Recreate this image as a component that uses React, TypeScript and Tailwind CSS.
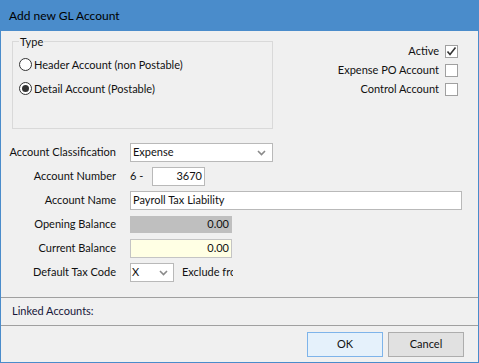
import React from 'react';

function Radio({ checked, label }: { checked?: boolean; label: string }) {
  return (
    <label className="flex items-center gap-[2px] h-[15px]">
      <span className="w-[13px] h-[13px] rounded-full border border-[#333] bg-white flex items-center justify-center">
        {checked && <span className="w-[7px] h-[7px] rounded-full bg-[#333]" />}
      </span>
      <span>{label}</span>
    </label>
  );
}

function Check({ checked, label }: { checked?: boolean; label: string }) {
  return (
    <div className="flex items-center justify-end gap-[6px] h-[13px]">
      <span>{label}</span>
      <span className="w-[13px] h-[13px] border border-[#a0a0a0] bg-white flex items-center justify-center">
        {checked && (
          <svg width="11" height="11" viewBox="0 0 11 11">
            <polyline points="1.5,5.5 4,8.5 9.5,1.5" fill="none" stroke="#333" strokeWidth="1.6" />
          </svg>
        )}
      </span>
    </div>
  );
}

function Chevron() {
  return (
    <svg width="9" height="6" viewBox="0 0 9 6">
      <polyline points="1,1 4.5,4.5 8,1" fill="none" stroke="#8a8a8a" strokeWidth="1.6" />
    </svg>
  );
}

function Row({ label, children }: { label: string; children: React.ReactNode }) {
  return (
    <div className="flex items-center h-[19px]">
      <div className="w-[116px] text-right pr-[1px]">{label}</div>
      <div className="ml-[13px] flex items-center h-full">{children}</div>
    </div>
  );
}

export default function App() {
  return (
    <div
      className="w-[479px] h-[363px] bg-[#f0f0f0] border-x border-b border-[#4a8ccb] flex flex-col text-[11px] text-[#111] overflow-hidden whitespace-nowrap"
      style={{ fontFamily: 'Lato, "Noto Sans", sans-serif' }}
    >
      <div className="h-[31px] shrink-0 bg-[#4a8ccb] -mx-px px-[9px] flex items-center text-[12px] text-black">
        Add new GL Account
      </div>

      <div className="flex-1 flex flex-col">
        <div className="flex justify-between pt-[3px]">
          <fieldset className="ml-[11px] w-[261px] h-[95px] border border-[#d9d9d9] px-[6px] leading-[15px]">
            <legend className="px-px">Type</legend>
            <div className="flex flex-col gap-[9px] mt-[8px]">
              <Radio label="Header Account (non Postable)" />
              <Radio checked label="Detail Account (Postable)" />
            </div>
          </fieldset>
          <div className="flex flex-col gap-[6px] pt-[11px] pr-[20px]">
            <Check checked label="Active" />
            <Check label="Expense PO Account" />
            <Check label="Control Account" />
          </div>
        </div>

        <div className="flex flex-col gap-[5px] mt-[14px]">
          <Row label="Account Classification">
            <div className="w-[143px] h-[19px] border border-[#b9b9b9] bg-white flex items-center justify-between pl-[2px] pr-[6px]">
              <span>Expense</span>
              <Chevron />
            </div>
          </Row>
          <Row label="Account Number">
            <span className="w-[22px]">6 -</span>
            <div className="w-[53px] h-[19px] border border-[#b9b9b9] bg-white flex items-center justify-end pr-[2px]">
              3670
            </div>
          </Row>
          <Row label="Account Name">
            <div className="w-[332px] h-[19px] border border-[#b9b9b9] bg-white flex items-center pl-[2px]">
              Payroll Tax Liability
            </div>
          </Row>
          <Row label="Opening Balance">
            <div className="w-[102px] h-[17px] bg-[#bfbfbf] flex items-center justify-end pr-[3px]">0.00</div>
          </Row>
          <Row label="Current Balance">
            <div className="w-[102px] h-[19px] border border-[#c4c4c4] bg-[#ffffe4] flex items-center justify-end pr-[2px]">
              0.00
            </div>
          </Row>
          <Row label="Default Tax Code">
            <div className="w-[44px] h-[19px] border border-[#b9b9b9] bg-white flex items-center justify-between pl-[1px] pr-[5px]">
              <span>X</span>
              <Chevron />
            </div>
            <span className="ml-[8px] w-[51px] overflow-hidden">Exclude fro</span>
          </Row>
        </div>

        <div className="mt-auto border-t border-[#a0a0a0] h-[28px] flex items-center pl-[11px] text-[#16163a]">
          Linked Accounts:
        </div>
      </div>

      <div className="h-[37px] shrink-0 border-t border-[#a0a0a0] flex justify-end items-start gap-[5px] pt-[6px] pr-[14px]">
        <button className="w-[76px] h-[25px] border border-[#7eb4ea] bg-[#e5f1fb]">OK</button>
        <button className="w-[76px] h-[25px] border border-[#adadad] bg-[#e1e1e1]">Cancel</button>
      </div>
    </div>
  );
}
